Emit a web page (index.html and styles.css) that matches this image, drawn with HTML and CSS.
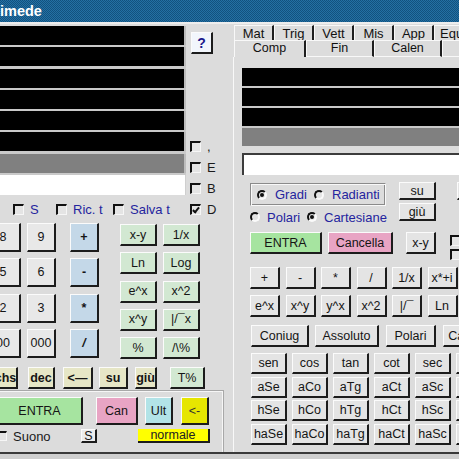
FILE: index.html
```html
<!DOCTYPE html>
<html>
<head>
<meta charset="utf-8">
<title>Archimede</title>
<link rel="stylesheet" href="styles.css">
</head>
<body>
<div class="window">
  <div class="titlebar"><span class="title">imede</span></div>
  <div class="main">
    <div class="left">
      <div class="top">
        <div class="display">
          <div class="drow"></div>
          <div class="drow"></div>
          <div class="drow"></div>
          <div class="drow"></div>
          <div class="drow"></div>
          <div class="drow"></div>
          <div class="drow gray"></div>
          <div class="drow white"></div>
        </div>
        <div class="side">
          <button class="btn help">?</button>
          <div class="sidechks">
            <div class="chkrow"><span class="box"></span><span class="lbl">,</span></div>
            <div class="chkrow"><span class="box"></span><span class="lbl">E</span></div>
            <div class="chkrow"><span class="box"></span><span class="lbl">B</span></div>
          </div>
        </div>
      </div>
      <div class="opts">
        <div class="opt o1"><span class="box"></span><span class="blue">S</span></div>
        <div class="opt o2"><span class="box"></span><span class="blue">Ric. t</span></div>
        <div class="opt o3"><span class="box"></span><span class="blue">Salva t</span></div>
        <div class="opt"><span class="box checked"></span><span class="lbl">D</span></div>
      </div>
      <div class="keypad">
        <div class="ncol c1">
          <button class="btn num">8</button>
          <button class="btn num">5</button>
          <button class="btn num">2</button>
          <button class="btn num">00</button>
        </div>
        <div class="ncol c2">
          <button class="btn num">9</button>
          <button class="btn num">6</button>
          <button class="btn num">3</button>
          <button class="btn num">000</button>
        </div>
        <div class="ncol c3">
          <button class="btn op">+</button>
          <button class="btn op">-</button>
          <button class="btn op">*</button>
          <button class="btn op slash">/</button>
        </div>
        <div class="funcs">
          <button class="btn fn">x-y</button>
          <button class="btn fn">1/x</button>
          <button class="btn fn">Ln</button>
          <button class="btn fn">Log</button>
          <button class="btn fn">e^x</button>
          <button class="btn fn">x^2</button>
          <button class="btn fn">x^y</button>
          <button class="btn fn">|/&#175;x</button>
          <button class="btn fn">%</button>
          <button class="btn fn">/\%</button>
        </div>
      </div>
      <div class="editrow">
        <button class="btn ed e-chs">chs</button>
        <button class="btn ed e-dec">dec</button>
        <button class="btn ed e-back">&lt;&#8212;</button>
        <button class="btn ed e-su">su</button>
        <button class="btn ed e-giu">gi&ugrave;</button>
        <button class="btn fn e-tp">T%</button>
      </div>
      <div class="frame">
        <div class="entrarow">
          <button class="btn entra l-entra">ENTRA</button>
          <button class="btn can l-can">Can</button>
          <button class="btn ult">Ult</button>
          <button class="btn back">&lt;-</button>
        </div>
        <div class="suonorow">
          <div class="opt suono"><span class="box"></span><span class="lbl">Suono</span></div>
          <button class="btn small">S</button>
          <div class="normale">normale</div>
        </div>
      </div>
    </div>

    <div class="right">
      <div class="tabs1">
        <div class="tab">Mat</div>
        <div class="tab">Trig</div>
        <div class="tab">Vett</div>
        <div class="tab">Mis</div>
        <div class="tab">App</div>
        <div class="tab wide">Equaz</div>
      </div>
      <div class="tabs2">
        <div class="tab2 sel">Comp</div>
        <div class="tab2">Fin</div>
        <div class="tab2">Calen</div>
        <div class="tab2"></div>
      </div>
      <div class="nbody">
        <div class="rdisp">
          <div class="rrow"></div>
          <div class="rrow"></div>
          <div class="rrow"></div>
          <div class="rrow gray"></div>
        </div>
        <div class="rfield"></div>
        <div class="ctrl">
          <div class="ctrl-left">
            <div class="radioframe">
              <div class="ritem w57"><span class="radio on"></span><span class="blue">Gradi</span></div>
              <div class="ritem"><span class="radio"></span><span class="blue">Radianti</span></div>
            </div>
            <div class="polrow">
              <div class="ritem w57"><span class="radio"></span><span class="blue">Polari</span></div>
              <div class="ritem"><span class="radio on"></span><span class="blue">Cartesiane</span></div>
            </div>
          </div>
          <div class="sugiu">
            <button class="btn sg">su</button>
            <button class="btn sg">gi&ugrave;</button>
          </div>
          <button class="btn sliver"></button>
        </div>
        <div class="enrow">
          <button class="btn entra r-entra">ENTRA</button>
          <button class="btn can r-can">Cancella</button>
          <button class="btn r-xy">x-y</button>
          <div class="chkcol"><span class="box"></span><span class="box"></span></div>
        </div>
        <div class="oprow first">
          <button class="btn sq">+</button>
          <button class="btn sq">-</button>
          <button class="btn sq">*</button>
          <button class="btn sq">/</button>
          <button class="btn sq">1/x</button>
          <button class="btn sq">x*+i</button>
        </div>
        <div class="oprow">
          <button class="btn sq">e^x</button>
          <button class="btn sq">x^y</button>
          <button class="btn sq">y^x</button>
          <button class="btn sq">x^2</button>
          <button class="btn sq">|/&#175;</button>
          <button class="btn sq">Ln</button>
        </div>
        <div class="wrow">
          <button class="btn w-con">Coniug</button>
          <button class="btn w-ass">Assoluto</button>
          <button class="btn w-pol">Polari</button>
          <button class="btn w-car">Cartesiane</button>
        </div>
        <div class="trig">
          <button class="btn tg">sen</button>
          <button class="btn tg">cos</button>
          <button class="btn tg">tan</button>
          <button class="btn tg">cot</button>
          <button class="btn tg">sec</button>
          <button class="btn tg"></button>
          <button class="btn tg">aSe</button>
          <button class="btn tg">aCo</button>
          <button class="btn tg">aTg</button>
          <button class="btn tg">aCt</button>
          <button class="btn tg">aSc</button>
          <button class="btn tg"></button>
          <button class="btn tg">hSe</button>
          <button class="btn tg">hCo</button>
          <button class="btn tg">hTg</button>
          <button class="btn tg">hCt</button>
          <button class="btn tg">hSc</button>
          <button class="btn tg"></button>
          <button class="btn tg">haSe</button>
          <button class="btn tg">haCo</button>
          <button class="btn tg">haTg</button>
          <button class="btn tg">haCt</button>
          <button class="btn tg">haSc</button>
          <button class="btn tg"></button>
        </div>
      </div>
    </div>
  </div>
  <div class="bottomedge"></div>
</div>
</body>
</html>
```
FILE: styles.css
```css
html, body {
  margin: 0;
  padding: 0;
  width: 459px;
  height: 459px;
  overflow: hidden;
  background: #dcdcdc;
  font-family: "Liberation Sans", Arial, sans-serif;
  font-size: 12.5px;
  color: #111;
}

.window {
  display: flex;
  flex-direction: column;
  width: 459px;
  height: 459px;
}

.titlebar {
  height: 22px;
  flex: none;
  background-color: #175c8c;
  background-image: repeating-conic-gradient(#2470a3 0 25%, #12527f 0 50%);
  background-size: 2px 2px;
  color: #fff;
  font-weight: bold;
  font-size: 14.5px;
  line-height: 22px;
  overflow: hidden;
}

.main {
  flex: none;
  height: 428px;
  border-top: 2px solid #ededed;
  display: flex;
}

.bottomedge {
  flex: none;
  height: 5px;
  border-top: 2px solid #3a3a3a;
  background: #cfcfcf;
}

/* ---------- generic widgets ---------- */
.btn {
  box-sizing: border-box;
  margin: 0;
  padding: 0;
  font-family: inherit;
  font-size: 12.5px;
  color: #151515;
  background: #e4e4e4;
  border-style: solid;
  border-width: 1px 2px 2px 1px;
  border-color: #fbfbfb #1c1c1c #1c1c1c #fbfbfb;
  display: flex;
  align-items: center;
  justify-content: center;
  white-space: nowrap;
  overflow: hidden;
  flex: none;
}

.box {
  box-sizing: border-box;
  display: inline-block;
  flex: none;
  width: 11px;
  height: 11px;
  border-style: solid;
  border-width: 2px 1px 1px 2px;
  border-color: #111 #f6f6f6 #f6f6f6 #111;
  background: #e4e4e4;
  position: relative;
}

.box.checked::after {
  content: "";
  position: absolute;
  left: 2px;
  top: 0px;
  width: 2px;
  height: 5px;
  border-right: 2px solid #111;
  border-bottom: 2px solid #111;
  transform: rotate(40deg);
}

.radio {
  box-sizing: border-box;
  display: inline-block;
  flex: none;
  width: 10px;
  height: 10px;
  border-radius: 50%;
  border: 2px solid;
  border-color: #111 #fafafa #fafafa #111;
  background: #e4e4e4;
  position: relative;
}

.radio.on::after {
  content: "";
  position: absolute;
  left: 1px;
  top: 1px;
  width: 4px;
  height: 4px;
  border-radius: 50%;
  background: #111;
}

.blue { color: #24249e; }
.lbl { color: #1a1a1a; }

/* ---------- left panel ---------- */
.left {
  flex: none;
  width: 233px;
  display: flex;
  flex-direction: column;
}

.top {
  display: flex;
  margin-top: 2px;
}

.display {
  width: 186px;
  flex: none;
  display: grid;
  grid-template-rows: repeat(7, 19px) 20px;
  row-gap: 2.3px;
  background: #c9c9c9;
}

.drow {
  background: #000;
  border-right: 2px solid #bcbcbc;
}
.drow.gray { background: #808080; }
.drow.white { background: #fff; border-right: 1px solid #cfcfcf; }

.side {
  flex: none;
  width: 47px;
  display: flex;
  flex-direction: column;
}

.help {
  margin: 6px 0 0 5px;
  width: 22px;
  height: 22px;
  background: #f2f6fc;
  color: #1a1a8c;
  font-weight: bold;
  font-size: 14px;
}

.sidechks {
  margin-top: 87px;
  display: flex;
  flex-direction: column;
  gap: 10px;
}

.chkrow {
  display: flex;
  align-items: center;
  height: 11px;
  margin-left: 4px;
  gap: 6px;
  font-size: 13px;
}

.opts {
  display: flex;
  align-items: center;
  margin-top: 9px;
  height: 11px;
  padding-left: 13px;
  font-size: 13px;
}

.opt {
  display: flex;
  align-items: center;
  gap: 6px;
  flex: none;
}
.o1 { width: 43px; }
.o2 { width: 57px; }
.o3 { width: 77px; }

.keypad {
  display: flex;
  align-items: flex-start;
  margin-top: 8px;
}

.ncol {
  display: flex;
  flex-direction: column;
  gap: 6.3px;
  flex: none;
}
.ncol .btn { height: 29px; }
.c1 { margin-left: -14px; width: 35px; }
.c2 { margin-left: 6px; width: 29px; }
.c3 { margin-left: 14px; width: 29px; }

.num { background: #e8e8e8; }
.op { background: #c4d8e8; font-weight: bold; }
.slash { font-style: italic; }

.funcs {
  margin-left: 21px;
  margin-top: 1px;
  display: grid;
  grid-template-columns: 37px 37px;
  grid-auto-rows: 22px;
  column-gap: 6px;
  row-gap: 6.3px;
}

.fn { background: #d2e8d2; }

.editrow {
  display: flex;
  margin-top: 8px;
  height: 22px;
}
.editrow .btn { height: 22px; }
.ed { background: #e6e6c6; font-weight: bold; }
.e-chs { margin-left: -6px; width: 24px; }
.e-dec { margin-left: 10px; width: 27px; }
.e-back { margin-left: 8px; width: 30px; }
.e-su { margin-left: 6px; width: 29px; }
.e-giu { margin-left: 7px; width: 22px; }
.e-tp { margin-left: 13px; width: 35px; }

.frame {
  flex: 1;
  margin-top: 1px;
  margin-left: -10px;
  width: 234px;
  box-sizing: border-box;
  border-top: 1px solid #a8a8a8;
  border-right: 1px solid #a8a8a8;
  box-shadow: inset 0 1px #f6f6f6, inset -1px 0 #f6f6f6;
  padding-top: 6px;
}

.entrarow {
  display: flex;
  height: 28px;
}
.entrarow .btn { height: 28px; }
.entra { background: #a6e4a0; }
.can { background: #e8a4c4; }
.l-entra { margin-left: 7px; width: 86px; }
.l-can { margin-left: 13px; width: 42px; }
.ult { margin-left: 7px; width: 28px; background: #b2e3e7; }
.back { margin-left: 8px; width: 28px; background: #e6e600; color: #333; }

.suonorow {
  display: flex;
  align-items: center;
  margin-top: 4px;
  height: 14px;
}
.suono {
  margin-left: 7px;
  width: 84px;
  font-size: 13px;
}
.suono .box { width: 10px; height: 10px; }
.small {
  width: 16px;
  height: 14px;
  background: #ececec;
  font-size: 12.5px;
}
.normale {
  box-sizing: border-box;
  margin-left: 41px;
  width: 72px;
  height: 14px;
  background: #ffff00;
  border-right: 2px solid #1c1c1c;
  border-bottom: 2px solid #1c1c1c;
  font-size: 12.5px;
  line-height: 12px;
  text-align: center;
  color: #222;
}

/* ---------- right panel ---------- */
.right {
  flex: none;
  width: 340px;
  display: flex;
  flex-direction: column;
}

.tabs1 {
  display: flex;
  margin-top: 1px;
  margin-left: 1px;
  height: 15px;
}
.tab {
  box-sizing: border-box;
  width: 40px;
  height: 15px;
  flex: none;
  border-top: 1px solid #f8f8f8;
  border-left: 1px solid #f8f8f8;
  border-right: 2px solid #1e1e1e;
  text-align: center;
  font-size: 13px;
  line-height: 16px;
  overflow: hidden;
}
.tab.wide { width: 50px; }

.tabs2 {
  display: flex;
  margin-left: 1px;
  height: 17px;
}
.tab2 {
  box-sizing: border-box;
  width: 68px;
  height: 17px;
  flex: none;
  border-top: 1px solid #f8f8f8;
  border-left: 1px solid #f8f8f8;
  border-right: 2px solid #1e1e1e;
  border-bottom: 1px solid #f8f8f8;
  text-align: center;
  font-size: 12.5px;
  line-height: 15px;
}
.tab2.sel {
  width: 72px;
  border-bottom: none;
}

.nbody {
  flex: 1;
  border-left: 1px solid #f8f8f8;
  display: flex;
  flex-direction: column;
}

.rdisp {
  margin: 11px 0 0 8px;
  display: grid;
  grid-template-rows: repeat(4, 18px);
  row-gap: 2px;
  background: #c9c9c9;
}
.rrow { background: #000; }
.rrow.gray { background: #808080; }

.rfield {
  box-sizing: border-box;
  margin: 7px 0 0 8px;
  height: 22px;
  background: #fff;
  border-top: 2px solid #3c3c3c;
  border-left: 2px solid #3c3c3c;
}

.ctrl {
  display: flex;
  margin-left: 16px;
  align-items: flex-start;
}
.ctrl-left {
  width: 136px;
  flex: none;
  font-size: 13px;
}
.radioframe {
  box-sizing: border-box;
  margin-top: 8px;
  height: 23px;
  display: flex;
  align-items: center;
  padding-left: 6px;
  border: 1px solid;
  border-color: #8a8a8a #f8f8f8 #f8f8f8 #8a8a8a;
  box-shadow: inset 1px 1px #f8f8f8, inset -1px -1px #8a8a8a;
}
.ritem {
  display: flex;
  align-items: center;
  gap: 7px;
  flex: none;
}
.radioframe .ritem { gap: 8px; }
.w57 { width: 57px; }
.polrow {
  display: flex;
  align-items: center;
  margin-top: 4px;
  height: 14px;
}

.sugiu {
  margin-left: 13px;
  margin-top: 7px;
  display: flex;
  flex-direction: column;
  gap: 3px;
}
.sg { width: 37px; height: 18px; }
.sliver {
  margin-left: 21px;
  margin-top: 7px;
  width: 40px;
  height: 18px;
}

.enrow {
  display: flex;
  margin-top: 8px;
  height: 22px;
}
.enrow .btn { height: 22px; }
.r-entra { margin-left: 16px; width: 72px; }
.r-can { margin-left: 6px; width: 65px; }
.r-xy { margin-left: 13px; width: 30px; }
.chkcol {
  margin-left: 14px;
  margin-top: 3px;
  display: flex;
  flex-direction: column;
  gap: 3px;
}

.oprow {
  display: flex;
  margin-top: 6px;
  margin-left: 16px;
  gap: 5.5px;
  height: 22px;
}
.oprow.first { margin-top: 13px; }
.sq { width: 30px; height: 22px; }

.wrow {
  display: flex;
  margin-top: 8px;
  margin-left: 17px;
  height: 22px;
}
.wrow .btn { height: 22px; }
.w-con { width: 58px; }
.w-ass { margin-left: 6px; width: 64px; }
.w-pol { margin-left: 7px; width: 50px; }
.w-car { margin-left: 7px; width: 72px; }

.trig {
  margin-top: 6px;
  margin-left: 17px;
  display: grid;
  grid-template-columns: repeat(6, 36px);
  grid-auto-rows: 21px;
  column-gap: 5px;
  row-gap: 2.5px;
}
```
